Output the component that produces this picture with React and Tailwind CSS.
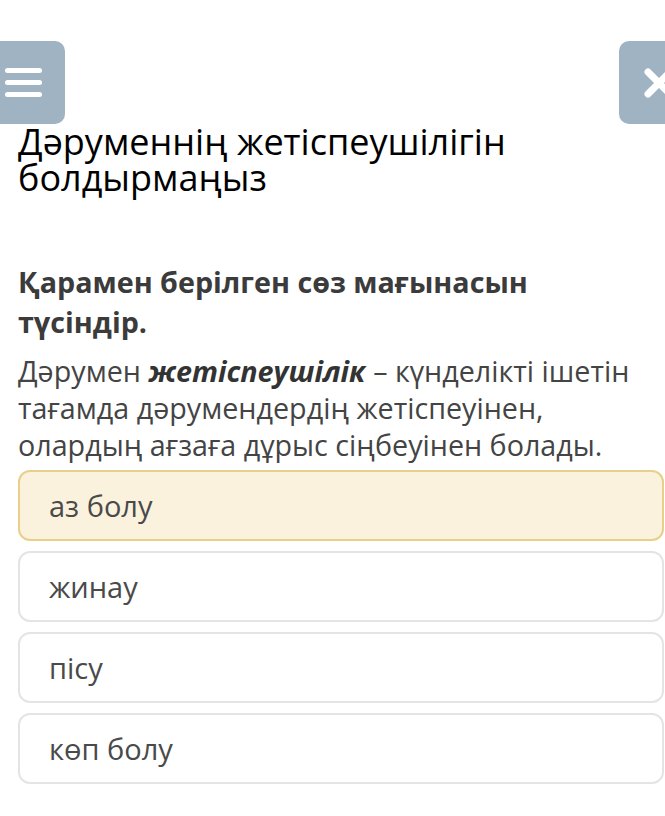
import React from "react";

const options = ["аз болу", "жинау", "пісу", "көп болу"];

export default function App() {
  return (
    <div className="w-[665px] h-[816px] bg-white overflow-hidden font-['Open_Sans',sans-serif]">
      <div className="flex justify-between pt-[41px]">
        <button className="w-[65px] h-[83px] bg-[#9fb3c2] rounded-r-[10px] flex flex-col justify-center gap-[7px] pl-[5px]">
          <span className="block w-[37px] h-[5px] bg-white rounded-full" />
          <span className="block w-[37px] h-[5px] bg-white rounded-full" />
          <span className="block w-[37px] h-[5px] bg-white rounded-full" />
        </button>
        <button className="w-[46px] h-[83px] bg-[#9fb3c2] rounded-l-[10px] flex items-center pl-[22px] overflow-hidden">
          <svg width="36" height="36" viewBox="0 0 36 36" className="shrink-0">
            <path d="M7 7 L29 29 M29 7 L7 29" stroke="white" strokeWidth="7" strokeLinecap="round" />
          </svg>
        </button>
      </div>
      <div className="px-[18px]">
        <h1 className="text-[36px] leading-[36px] text-black font-normal">
          Дəруменнің жетіспеушілігін болдырмаңыз
        </h1>
        <h2 className="mt-[66px] text-[28.7px] leading-[40px] font-bold text-[#3b3b3b]">
          Қарамен берілген сөз мағынасын түсіндір.
        </h2>
        <p className="mt-[10px] text-[28.7px] leading-[37px] text-[#444]">
          Дəрумен <b className="font-bold italic text-[#333]">жетіспеушілік</b> – күнделікті ішетін тағамда дəрумендердің жетіспеуінен, олардың ағзаға дұрыс сіңбеуінен болады.
        </p>
      </div>
      <div className="flex flex-col gap-[10px] pl-[18px] pr-[1px] mt-[7px]">
        {options.map((o, i) => (
          <div
            key={o}
            className={
              i === 0
                ? "h-[71px] rounded-[12px] border-2 border-[#e6d08a] bg-[#fbf2de] flex items-center pl-[29px] text-[29px] text-[#4a4a4a]"
                : "h-[71px] rounded-[12px] border-2 border-[#e4e4e4] bg-white flex items-center pl-[29px] text-[29px] text-[#4a4a4a]"
            }
          >
            {o}
          </div>
        ))}
      </div>
    </div>
  );
}
